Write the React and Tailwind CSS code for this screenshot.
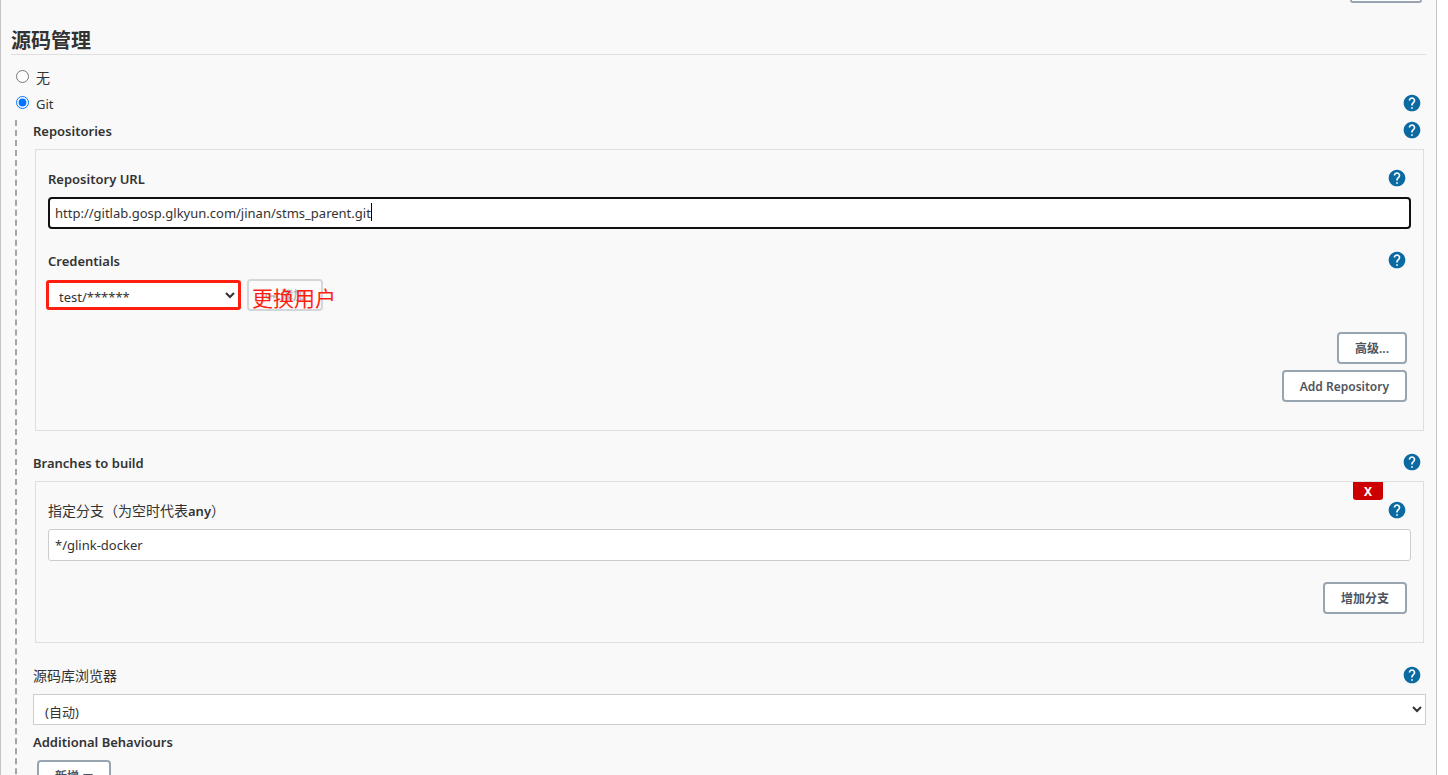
import { useEffect, useRef } from 'react';

// Small shared form primitives.

function HelpButton({ topic }) {
  return (
    <button type="button" aria-label={`Help for ${topic}`} className="h-5 w-5 shrink-0 text-[#0b6aa2]">
      <svg viewBox="0 0 24 24" className="h-5 w-5" fill="currentColor" aria-hidden>
        <circle cx="12" cy="12" r="8" fill="#fff" />
        <path d="M12 2C6.48 2 2 6.48 2 12s4.48 10 10 10 10-4.48 10-10S17.52 2 12 2zm1 17h-2v-2h2v2zm2.07-7.75l-.9.92C13.45 12.9 13 13.5 13 15h-2v-.5c0-1.1.45-2.1 1.17-2.83l1.24-1.26c.37-.36.59-.86.59-1.41 0-1.1-.9-2-2-2s-2 .9-2 2H8c0-2.21 1.79-4 4-4s4 1.79 4 4c0 .88-.36 1.68-.93 2.25z" />
      </svg>
    </button>
  );
}

function LabelRow({ htmlFor, label, topic = label, help = true, className = '' }) {
  const Tag = htmlFor ? 'label' : 'div';
  return (
    <div className={`flex h-5 items-start justify-between pr-1 ${className}`}>
      <Tag htmlFor={htmlFor} className="text-[13px] leading-[22px] font-semibold">{label}</Tag>
      {help && <HelpButton topic={topic} />}
    </div>
  );
}

// Chinese captions run one size up and lighter than the Latin ones.
function Zh({ children }) {
  return <span className="text-[14px] font-normal">{children}</span>;
}

function Button({ children, className = '', ...props }) {
  return (
    <button
      type="button"
      className={`h-8 rounded-[4px] border-2 border-[#98a5b0] bg-white px-4 pt-[2px] text-[12px] font-semibold whitespace-nowrap text-[#4d545d] ${className}`}
      {...props}
    >
      {children}
    </button>
  );
}

function Panel({ children }) {
  return <div className="relative mx-[2px] mt-[9px] border border-[#dfdfdf] px-3 pt-[18px] pb-7">{children}</div>;
}

function ScmOption({ id, label, help, ...props }) {
  return (
    <div className="flex h-5 items-start justify-between pr-1">
      <div className="flex items-start gap-[7px] pl-[5px]">
        <input type="radio" name="scm" id={id} className="mt-[3px] h-[13px] w-[13px]" {...props} />
        <label htmlFor={id} className="text-[13px] leading-[22px]">{label}</label>
      </div>
      {help && <HelpButton topic={label} />}
    </div>
  );
}

export default function App() {
  const urlRef = useRef(null);

  useEffect(() => {
    const el = urlRef.current;
    el.focus();
    el.setSelectionRange(el.value.length, el.value.length);
  }, []);

  return (
    <div className="h-screen overflow-hidden bg-white pr-[11px] font-['Noto_Sans','Noto_Sans_CJK_SC',sans-serif] text-[#333]">
      <main className="min-h-screen border-x border-[#c4c4c4] bg-[#f9f9f9] px-[10px]">
        <div className="flex justify-end pr-1">
          <button
            type="button"
            aria-label="高级"
            className="h-[3px] w-[72px] rounded-b-[4px] border-2 border-t-0 border-[#98a5b0] bg-white"
          />
        </div>

        <h2 className="mt-6 border-b border-[#dfdfdf] text-[20px] leading-[27px] font-bold">源码管理</h2>

        <div className="mt-3 flex flex-col gap-[6px]">
          <ScmOption id="scm-none" label={<Zh>无</Zh>} />
          <ScmOption id="scm-git" label="Git" help defaultChecked />
        </div>

        <div className="mt-[7px] ml-1 border-l-2 border-dashed border-[#a5a5a5] pb-8 pl-4">
          <LabelRow label="Repositories" />
          <Panel>
            <LabelRow htmlFor="repo-url" label="Repository URL" />
            <div className="relative mt-[9px]">
              <input
                ref={urlRef}
                id="repo-url"
                type="text"
                spellCheck={false}
                defaultValue="http://gitlab.gosp.glkyun.com/jinan/stms_parent.git"
                className="block h-8 w-full rounded-[4px] border-2 border-[#101010] bg-white px-[5px] text-[13px] caret-transparent outline-none"
              />
              <span className="pointer-events-none absolute top-[6px] left-[323px] h-[18px] w-px bg-black" />
            </div>
            <LabelRow htmlFor="credentials" label="Credentials" className="mt-[21px]" />
            <div className="mt-[9px] -ml-[2px] flex items-center gap-[6px]">
              <select
                id="credentials"
                className="h-[30px] w-[195px] rounded-[3px] border-3 border-[#ff1f10] bg-white pt-1 pl-[6px] text-[13px]"
              >
                <option>test/******</option>
              </select>
              <div className="relative">
                <Button disabled className="flex w-[76px] items-center justify-center gap-1 opacity-40">
                  <svg viewBox="0 0 16 16" className="h-3 w-3" fill="none" stroke="currentColor" strokeWidth="2" aria-hidden>
                    <circle cx="4.500" cy="8" r="3" />
                    <path d="M7.500 8H15v3M12 8v3" />
                  </svg>
                  添加
                </Button>
                <span className="pointer-events-none absolute top-1 left-[5px] text-[21px] leading-[30px] whitespace-nowrap text-[#ff1f10]">
                  更换用户
                </span>
              </div>
            </div>
            <div className="mt-[21px] flex flex-col items-end gap-[6px] pr-1">
              <Button>高级...</Button>
              <Button>Add Repository</Button>
            </div>
          </Panel>

          <LabelRow label="Branches to build" className="mt-[21px]" />
          <Panel>
            <button
              type="button"
              aria-label="删除分支"
              className="absolute top-0 right-10 h-[18px] w-[30px] rounded-b-[3px] bg-[#c00] pt-px text-[12px] leading-[18px] font-bold text-white"
            >
              X
            </button>
            <LabelRow
              htmlFor="branch"
              label={<><Zh>指定分支（为空时代表</Zh>any<Zh>）</Zh></>}
              topic="指定分支"
            />
            <input
              id="branch"
              type="text"
              defaultValue="*/glink-docker"
              className="mt-[9px] block h-8 w-full rounded-[3px] border border-[#ccc] bg-white px-[6px] text-[13px]"
            />
            <div className="mt-[21px] flex justify-end pr-1">
              <Button>增加分支</Button>
            </div>
          </Panel>

          <LabelRow htmlFor="browser" label={<Zh>源码库浏览器</Zh>} topic="源码库浏览器" className="mt-[22px]" />
          <select
            id="browser"
            className="mt-[9px] block h-[31px] w-full border border-[#ccc] bg-white pt-1 pl-[7px] text-[13px]"
          >
            <option>(自动)</option>
          </select>

          <LabelRow label="Additional Behaviours" help={false} className="mt-[6px]" />
          <Button className="mt-[9px] ml-1 flex items-center gap-1">
            新增
            <svg viewBox="0 0 10 6" className="h-[6px] w-[10px]" fill="currentColor" aria-hidden>
              <path d="M0 0h10L5 6z" />
            </svg>
          </Button>
        </div>
      </main>
    </div>
  );
}
